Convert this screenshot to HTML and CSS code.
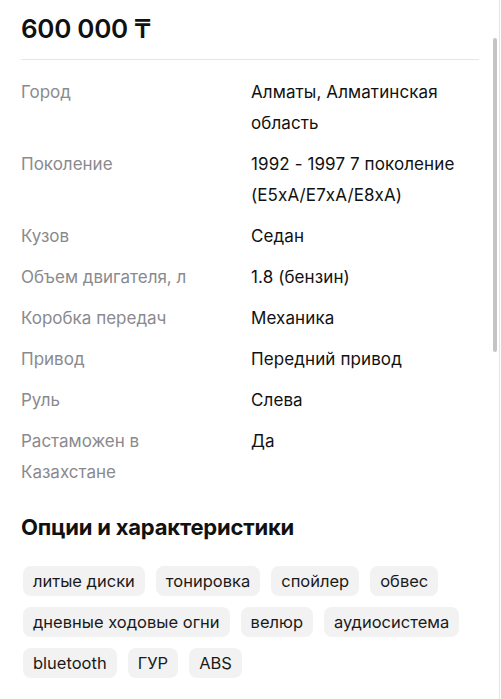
FILE: index.html
```html
<!DOCTYPE html>
<html lang="ru">
<head>
<meta charset="utf-8">
<link rel="stylesheet" href="styles.css">
</head>
<body>
<main class="page">
  <h1 class="price">600 000 ₸</h1>
  <hr class="divider">
  <dl class="specs">
    <dt>Город</dt><dd>Алматы, Алматинская область</dd>
    <dt>Поколение</dt><dd>1992 - 1997 7 поколение (E5xA/E7xA/E8xA)</dd>
    <dt>Кузов</dt><dd>Седан</dd>
    <dt>Объем двигателя, л</dt><dd>1.8 (бензин)</dd>
    <dt>Коробка передач</dt><dd>Механика</dd>
    <dt>Привод</dt><dd>Передний привод</dd>
    <dt>Руль</dt><dd>Слева</dd>
    <dt>Растаможен в Казахстане</dt><dd>Да</dd>
  </dl>
  <h2 class="section-title">Опции и характеристики</h2>
  <ul class="chips">
    <li>литые диски</li>
    <li>тонировка</li>
    <li>спойлер</li>
    <li>обвес</li>
    <li>дневные ходовые огни</li>
    <li>велюр</li>
    <li>аудиосистема</li>
    <li>bluetooth</li>
    <li>ГУР</li>
    <li>ABS</li>
  </ul>
</main>
<div class="scroll-track"></div>
<div class="scroll-thumb"></div>
</body>
</html>
```

FILE: styles.css
```css
html, body {
  margin: 0;
  padding: 0;
  background: #ffffff;
}
body {
  font-family: Inter, "Noto Sans", "Liberation Sans", sans-serif;
  color: #111111;
  overflow: hidden;
}
.page {
  padding: 12px 22px 0 21px;
}
.price {
  margin: 0;
  font-size: 26px;
  line-height: 34px;
  font-weight: 600;
  letter-spacing: -0.3px;
}
.divider {
  border: 0;
  border-top: 1px solid #e6e6e6;
  margin: 13px 0 17px;
}
.specs {
  display: grid;
  grid-template-columns: 230px 1fr;
  row-gap: 10px;
  margin: 0;
  font-size: 17px;
  line-height: 31px;
}
.specs dt {
  color: #8a8a8e;
  max-width: 185px;
}
.specs dd {
  margin: 0;
  color: #111111;
  letter-spacing: 0.1px;
}
.section-title {
  margin: 25px 0 25px;
  font-size: 22px;
  line-height: 28px;
  font-weight: 700;
  letter-spacing: -0.2px;
}
.chips {
  list-style: none;
  margin: 0 0 0 2px;
  padding: 0;
  display: flex;
  flex-wrap: wrap;
  gap: 11px;
}
.chips li {
  background: #f2f2f2;
  border-radius: 8px;
  height: 30px;
  line-height: 30px;
  padding: 0 10px;
  font-size: 16.5px;
  color: #1a1a1a;
}
.scroll-track {
  position: fixed;
  top: 0;
  right: 1px;
  width: 1px;
  height: 100%;
  background: #e4e4e4;
}
.scroll-thumb {
  position: fixed;
  top: 38px;
  right: 4px;
  width: 4px;
  height: 314px;
  border-radius: 2px;
  background: #c4c4c4;
}
```
